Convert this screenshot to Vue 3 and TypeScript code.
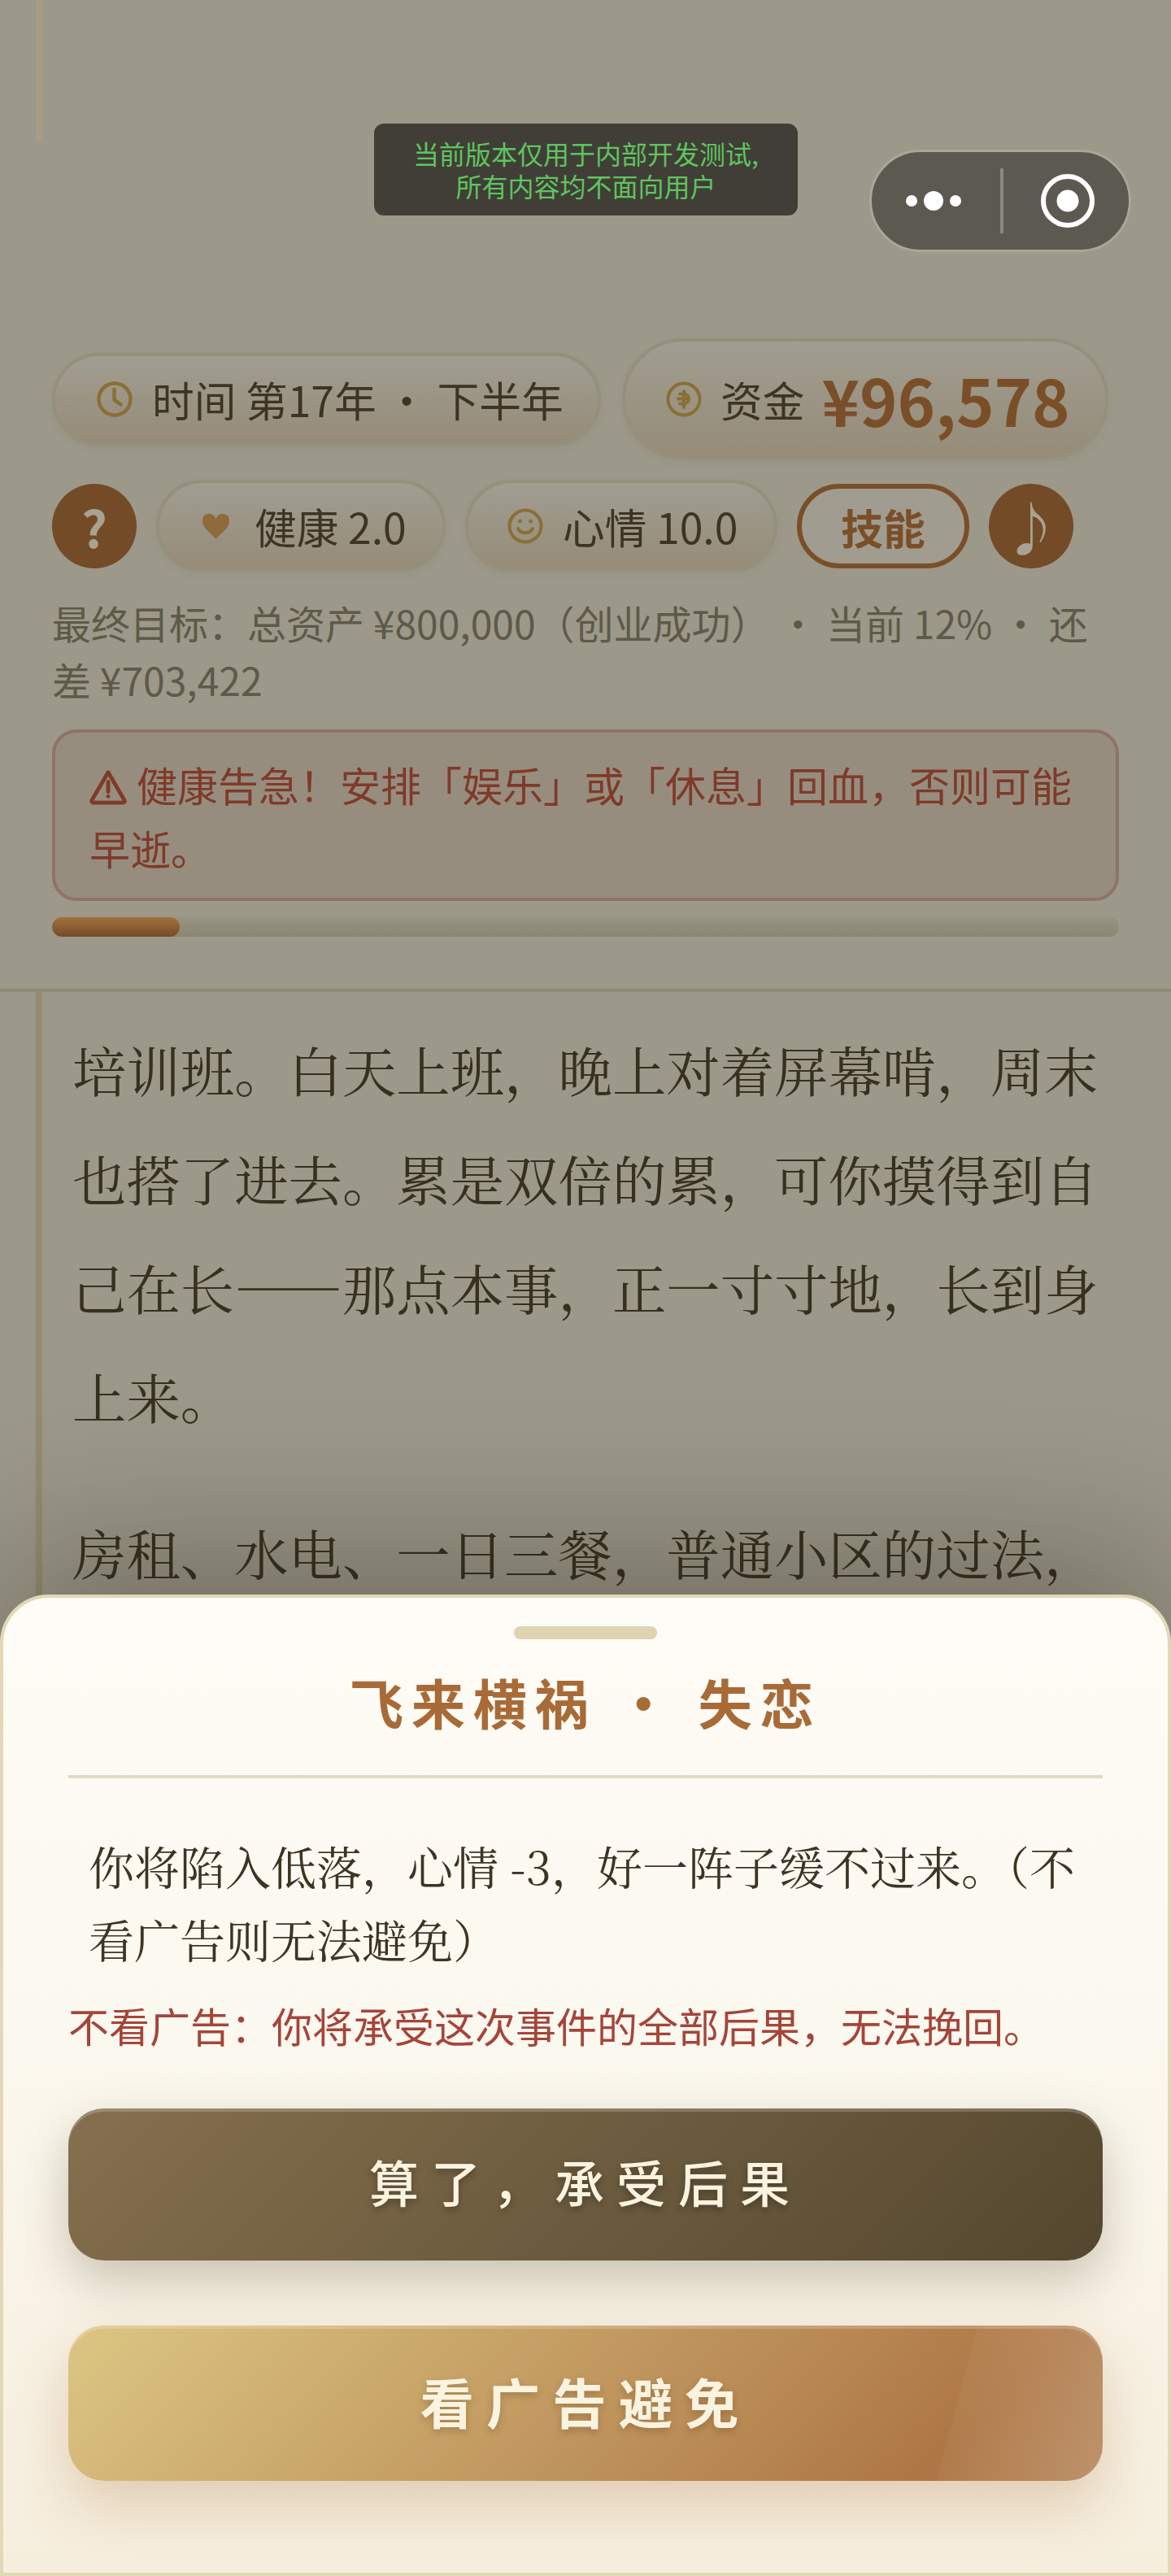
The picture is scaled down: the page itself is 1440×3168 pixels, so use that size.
<script setup lang="ts">
const story: string[] = [
  '培训班。白天上班，晚上对着屏幕啃，周末也搭了进去。累是双倍的累，可你摸得到自己在长——那点本事，正一寸寸地，长到身上来。',
  '房租、水电、一日三餐，普通小区的过法，',
]
const progress = 12
</script>

<template>
  <div class="page" lang="zh-CN">
    <span class="rail-top"></span>

    <header class="hud">
      <div class="row row-top">
        <div class="pill pill-time">
          <svg class="ico" viewBox="0 0 44 44" fill="none" stroke="#8a6f35" stroke-width="4.500" stroke-linecap="round">
            <circle cx="22" cy="22" r="19.500" />
            <path d="M21.500 10v12.500l8 6" />
          </svg>
          <span class="txt">时间 第17年 · 下半年</span>
        </div>
        <div class="pill pill-money">
          <svg class="ico" viewBox="0 0 44 44" fill="none" stroke="#8a6f35" stroke-width="4" stroke-linecap="round">
            <circle cx="22" cy="22" r="19.500" />
            <path d="M22 12v20M17 15.500h5a6 6 0 0 1 0 12h-5M15 21.500h12" />
          </svg>
          <span class="txt">资金</span>
          <span class="money">¥96,578</span>
        </div>
      </div>

      <div class="row row-stats">
        <button class="round" type="button">?</button>
        <div class="pill pill-stat pill-health">
          <svg class="ico-heart" viewBox="0 0 36 34" fill="#8f6a3c">
            <path d="M18 33C14 27 1 20 1 9.500 1 4 5 1 9.500 1 13.500 1 16.500 3.500 18 7 19.500 3.500 22.500 1 26.500 1 31 1 35 4 35 9.500 35 20 22 27 18 33Z" />
          </svg>
          <span class="txt">健康 2.0</span>
        </div>
        <div class="pill pill-stat pill-mood">
          <svg class="ico" viewBox="0 0 44 44" fill="none" stroke="#8a6f35" stroke-width="4" stroke-linecap="round">
            <circle cx="22" cy="22" r="19.500" />
            <path d="M13 25c3 7 15 7 18 0" />
            <circle cx="15.500" cy="16" r="1" stroke-width="3" />
            <circle cx="28.500" cy="16" r="1" stroke-width="3" />
          </svg>
          <span class="txt">心情 10.0</span>
        </div>
        <button class="skill" type="button">技能</button>
        <button class="round round-music" type="button">♪</button>
      </div>

      <p class="goal">最终目标：总资产 ¥800,000（创业成功） · 当前 12% · 还差 ¥703,422</p>

      <div class="warn">
        <svg class="warn-ico" viewBox="0 0 48 46" fill="none" stroke="#7f3a2a" stroke-width="5" stroke-linejoin="round">
          <path d="M24 4 45 40a2 2 0 0 1-2 3H5a2 2 0 0 1-2-3Z" />
          <path d="M24 16v13" stroke-linecap="round" />
          <circle cx="24" cy="35" r="1.500" fill="#7f3a2a" stroke-width="2" />
        </svg>健康告急！安排「娱乐」或「休息」回血，否则可能早逝。
      </div>

      <div class="bar">
        <div class="bar-fill" :style="{ width: progress + '%' }"></div>
      </div>
    </header>

    <main class="story">
      <p v-for="(para, i) in story" :key="i">{{ para }}</p>
    </main>

    <section class="sheet">
      <div class="handle"></div>
      <h2 class="title">飞来横祸 · 失恋</h2>
      <p class="desc">你将陷入低落，心情 -3，好一阵子缓不过来。（不看广告则无法避免）</p>
      <p class="hint">不看广告：你将承受这次事件的全部后果，无法挽回。</p>
      <button class="btn btn-dark" type="button">算了，承受后果</button>
      <button class="btn btn-gold" type="button">看广告避免</button>
    </section>

    <div class="toast">当前版本仅用于内部开发测试,<br />所有内容均不面向用户</div>

    <div class="capsule">
      <svg class="dots" viewBox="0 0 68 24" fill="#fff">
        <circle cx="7" cy="12" r="7" />
        <circle cx="34" cy="12" r="12" />
        <circle cx="61" cy="12" r="7" />
      </svg>
      <span class="capsule-line"></span>
      <svg class="target" viewBox="0 0 66 66" fill="#fff">
        <circle cx="33" cy="33" r="30" fill="none" stroke="#fff" stroke-width="6" />
        <circle cx="33" cy="33" r="13.500" />
      </svg>
    </div>
  </div>
</template>

<style scoped>
.page {
  position: relative;
  width: 1440px;
  height: 3168px;
  overflow: hidden;
  background: #9c988a;
  font-family: "Noto Sans CJK SC", "Noto Sans", sans-serif;
  color: #3e3424;
}

.rail-top {
  position: absolute;
  left: 44px;
  top: 0;
  width: 8px;
  height: 175px;
  background: #a59d86;
}

.hud {
  padding: 416px 64px 64px;
  border-bottom: 4px solid #8f8a74;
}

.row {
  display: flex;
  align-items: center;
}

.row-top {
  gap: 26px;
}

.row-stats {
  margin-top: 24px;
  gap: 24px;
}

.pill {
  display: flex;
  align-items: center;
  box-sizing: border-box;
  border: 4px solid #95907c;
  border-radius: 76px;
  background: linear-gradient(180deg, #a09d91 0%, #968c78 100%);
  box-shadow: 0 4px 12px rgba(60, 50, 30, 0.04);
}

.pill-time {
  width: 675px;
  height: 115px;
  padding-left: 51px;
}

.pill-money {
  width: 598px;
  height: 150px;
  padding-left: 50px;
}

.pill-stat {
  height: 114px;
}

.pill-health {
  width: 356px;
  padding-left: 52px;
}

.pill-mood {
  width: 384px;
  padding-left: 48px;
}

.ico {
  flex: none;
  width: 44px;
  height: 44px;
}

.pill-time .ico {
  margin-right: 24px;
}

.pill-money .ico {
  margin-right: 23px;
}

.pill-mood .ico {
  margin-right: 24px;
}

.ico-heart {
  flex: none;
  width: 35px;
  height: 33px;
  margin-right: 30px;
}

.txt {
  font-size: 51.7px;
  line-height: 70px;
  white-space: nowrap;
}

.money {
  margin-left: 21px;
  font-size: 79px;
  line-height: 100px;
  font-weight: 700;
  color: #7a4f28;
  white-space: nowrap;
}

.round {
  flex: none;
  width: 104px;
  height: 104px;
  padding: 0;
  border: 0;
  border-radius: 50%;
  background: #734b27;
  color: #a8a294;
  font-family: inherit;
  font-size: 62px;
  font-weight: 700;
  line-height: 104px;
}

.round-music {
  font-size: 70px;
  font-weight: 400;
}

.skill {
  flex: none;
  box-sizing: border-box;
  width: 212px;
  height: 104px;
  padding: 0;
  border: 6px solid #7a4f28;
  border-radius: 52px;
  background: #a09c90;
  color: #7a4f28;
  font-family: inherit;
  font-size: 51.7px;
  font-weight: 700;
}

.goal {
  margin: 26px 0 0;
  font-size: 48px;
  line-height: 70px;
  color: #5f5948;
}

.warn {
  box-sizing: border-box;
  margin-top: 27px;
  height: 211px;
  padding: 24px 42px 0;
  border: 4px solid #8f7268;
  border-radius: 30px;
  background: #978d7e;
  font-size: 50px;
  line-height: 78px;
  color: #7f3a2a;
}

.warn-ico {
  width: 46px;
  height: 44px;
  margin-right: 12px;
  vertical-align: -4px;
}

.bar {
  margin-top: 20px;
  height: 24px;
  border-radius: 12px;
  background: linear-gradient(180deg, #989482 0%, #8c8672 100%);
  overflow: hidden;
}

.bar-fill {
  height: 100%;
  border-radius: 12px;
  background: linear-gradient(180deg, #a2703c 0%, #744c28 100%);
}

.story {
  position: relative;
  padding: 28px 88px 0 89px;
  font-family: "Noto Serif CJK SC", "Liberation Serif", serif;
  font-size: 66.4px;
  line-height: 134px;
  color: #38301f;
}

.story::before {
  content: "";
  position: absolute;
  left: 44px;
  top: 0;
  width: 8px;
  height: 900px;
  background: #938c73;
}

.story p {
  margin: 0 0 58px;
}

.sheet {
  position: absolute;
  left: 0;
  right: 0;
  bottom: 0;
  height: 1207px;
  box-sizing: border-box;
  padding: 35px 80px 0;
  border: 4px solid #e3d8b5;
  border-radius: 60px 60px 0 0;
  background: linear-gradient(180deg, #fefcf6 0%, #fbf8ef 45%, #f6eedd 100%);
  box-shadow: 0 -40px 200px rgba(30, 25, 10, 0.36);
}

.handle {
  width: 176px;
  height: 16px;
  margin: 0 auto;
  border-radius: 8px;
  background: #ded3b2;
}

.title {
  margin: 36px 0 0;
  padding-bottom: 51px;
  border-bottom: 4px solid #e0d9c6;
  font-size: 66.4px;
  line-height: 80px;
  font-weight: 700;
  letter-spacing: 9.5px;
  text-align: center;
  color: #a86b38;
}

.desc {
  margin: 62px 0 0;
  padding: 0 25px;
  font-family: "Noto Serif CJK SC", "Liberation Serif", serif;
  font-size: 56px;
  line-height: 90px;
  color: #3e3424;
}

.hint {
  margin: 26px 0 0;
  font-size: 50px;
  line-height: 70px;
  color: #a5453a;
  white-space: nowrap;
}

.btn {
  position: relative;
  display: block;
  width: 100%;
  border: 0;
  border-radius: 44px;
  overflow: hidden;
  font-family: inherit;
  color: #faf3e0;
  text-align: center;
}

.btn-dark {
  height: 187px;
  margin-top: 68px;
  padding: 0 0 8px;
  background: linear-gradient(135deg, #85704e 0%, #54472f 100%);
  box-shadow: inset 0 4px 0 rgba(255, 255, 255, 0.2), 0 24px 60px rgba(80, 65, 35, 0.28);
  font-size: 61px;
  font-weight: 500;
  letter-spacing: 15px;
  text-shadow: 0 4px 8px rgba(0, 0, 0, 0.3);
}

.btn-gold {
  height: 191px;
  margin-top: 80px;
  padding: 0 0 8px;
  background: linear-gradient(135deg, #dcc684 0%, #ad7644 85%, #ad7644 100%);
  box-shadow: inset 0 4px 0 rgba(255, 255, 255, 0.2), 0 30px 70px rgba(173, 118, 68, 0.3);
  font-size: 66.4px;
  font-weight: 700;
  letter-spacing: 15px;
  text-shadow: 0 4px 8px rgba(90, 55, 20, 0.3);
}

.btn-gold::after {
  content: "";
  position: absolute;
  top: 0;
  bottom: 0;
  right: -41px;
  width: 220px;
  transform: skewX(-15deg);
  background: linear-gradient(90deg, rgba(255, 255, 255, 0.04), rgba(255, 255, 255, 0.22));
}

.toast {
  position: absolute;
  left: 460px;
  top: 152px;
  width: 521px;
  height: 113px;
  padding-top: 16px;
  box-sizing: border-box;
  border-radius: 12px;
  background: #403e37;
  color: #5fc45f;
  font-size: 32px;
  line-height: 40px;
  text-align: center;
}

.capsule {
  position: absolute;
  left: 1069px;
  top: 184px;
  width: 322px;
  height: 126px;
  box-sizing: border-box;
  display: flex;
  align-items: center;
  border: 3px solid #a9a69b;
  border-radius: 63px;
  background: #5c5950;
}

.dots {
  width: 68px;
  height: 24px;
  margin-left: 42px;
}

.capsule-line {
  width: 4px;
  height: 80px;
  margin-left: 48px;
  background: #8a8880;
}

.target {
  width: 66px;
  height: 66px;
  margin-left: 46px;
}
</style>

<style>
html,
body {
  margin: 0;
  background: #9c988a;
}
</style>
